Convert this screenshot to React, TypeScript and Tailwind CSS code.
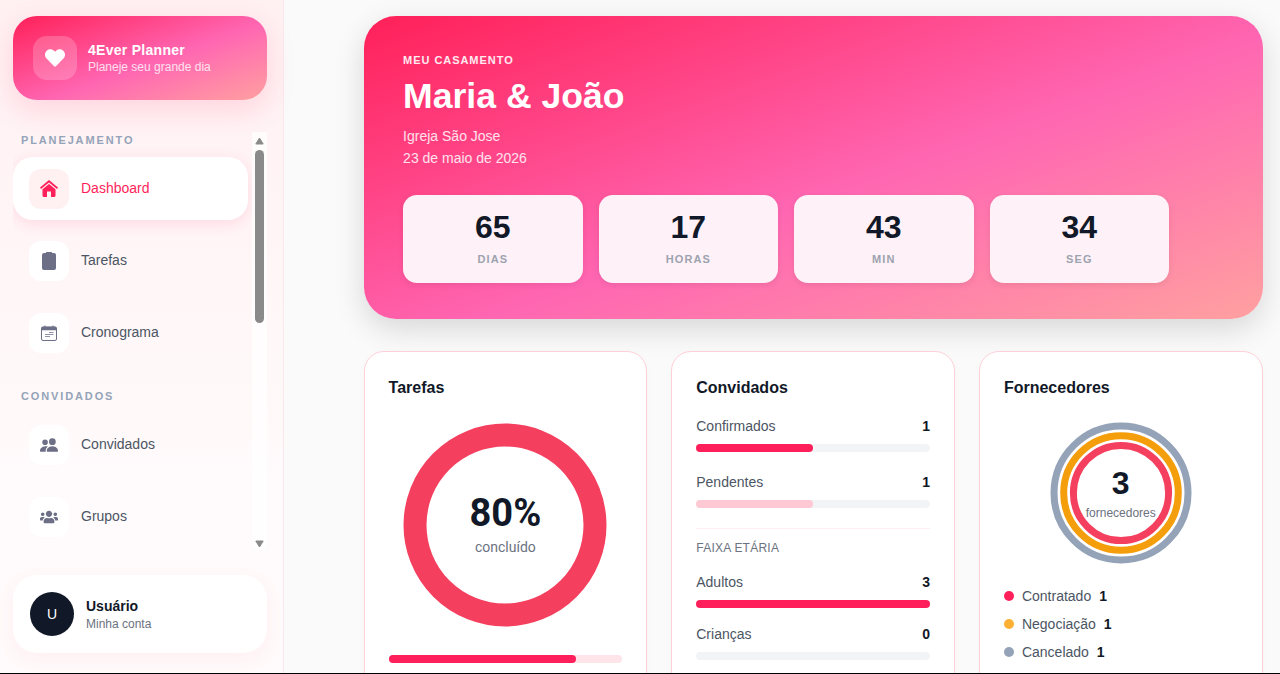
import React from "react";
import { FaHeart, FaUsers } from "react-icons/fa";
import { BsPeopleFill } from "react-icons/bs";

const grad = "bg-[linear-gradient(160deg,#ff2058_0%,#ff66b2_55%,#ffa0a0_100%)]";

function HomeIcon() {
  return (
    <svg width="18" height="17" viewBox="0 0 18 17" fill="currentColor">
      <path d="M9 0 L18 7.6 L17 9 L9 2.4 L1 9 L0 7.6 Z" />
      <path d="M9 3.9 L15.5 9.2 V15.5 Q15.5 17 14 17 H11 V11.5 H7 V17 H4 Q2.5 17 2.5 15.5 V9.2 Z" />
    </svg>
  );
}

function ClipIcon() {
  return (
    <svg width="14" height="18" viewBox="0 0 14 18" fill="currentColor">
      <path d="M4.5 0 H9.5 Q10 0 10 1 H12 Q14 1 14 3 V16 Q14 18 12 18 H2 Q0 18 0 16 V3 Q0 1 2 1 H4 Q4 0 4.5 0 Z" />
    </svg>
  );
}

function CalIcon() {
  return (
    <svg width="16" height="16" viewBox="0 0 16 16" fill="none" stroke="currentColor">
      <rect x="0.5" y="2" width="15" height="13.5" rx="1.5" strokeWidth="1" />
      <path d="M0.5 3.5 Q0.5 2 2 2 H14 Q15.5 2 15.5 3.5 V5 H0.5 Z" fill="currentColor" strokeWidth="0.5" />
      <path d="M4 0.5 V2.5 M12 0.5 V2.5" strokeWidth="1" />
      <path d="M8 7.5 H12.5 M4 9.5 H12.5 M4 11.5 H9" strokeWidth="1" opacity="0.75" />
    </svg>
  );
}

function NavItem({ icon, label, active }: { icon: React.ReactNode; label: string; active?: boolean }) {
  return (
    <div className={`flex h-[63px] items-center gap-3 rounded-[20px] pl-4 text-[14px] ${active ? "bg-white text-[#ff1f5a] shadow-[0_4px_16px_rgba(255,31,90,0.12)]" : "text-[#4b5563]"}`}>
      <div className={`flex h-10 w-10 items-center justify-center rounded-[12px] ${active ? "bg-[#fff0f2] text-[#ff1f5a]" : "bg-white text-[#6c6f86]"}`}>{icon}</div>
      <span>{label}</span>
    </div>
  );
}

function SectionLabel({ children, className }: { children: React.ReactNode; className?: string }) {
  return <div className={`pl-2 text-[11px] font-bold tracking-[1.87px] text-[#94a3b8] leading-[14px] ${className ?? ""}`}>{children}</div>;
}

function Bar({ label, value, pct, color }: { label: string; value: number; pct: number; color: string }) {
  return (
    <div>
      <div className="flex items-center justify-between text-[14px] leading-[20px]">
        <span className="text-[#4b5563]">{label}</span>
        <span className="font-bold text-[#111827]">{value}</span>
      </div>
      <div className="mt-2 h-2 rounded-full bg-[#f3f4f6]">
        <div className={`h-2 rounded-full ${color}`} style={{ width: `${pct}%` }} />
      </div>
    </div>
  );
}

function Stat({ value, label }: { value: string; label: string }) {
  return (
    <div className="flex h-[88px] w-[179.5px] flex-col items-center rounded-[14px] bg-[#fff1f8] pt-[14px] shadow-[0_2px_6px_rgba(0,0,0,0.08)]">
      <span className="text-[32px] font-bold leading-[36px] text-[#111827]">{value}</span>
      <span className="mt-[5px] text-[11px] font-semibold tracking-[0.1em] leading-[18px] text-[#9ca3af]">{label}</span>
    </div>
  );
}

function Legend({ color, label, value }: { color: string; label: string; value: number }) {
  return (
    <div className="flex h-[28px] items-center text-[14px]">
      <span className={`h-[10px] w-[10px] rounded-full ${color}`} />
      <span className="ml-2 text-[#4b5563]">{label}</span>
      <span className="ml-2 font-bold text-[#111827]">{value}</span>
    </div>
  );
}

function Card({ title, children }: { title: string; children: React.ReactNode }) {
  return (
    <div className="h-[360px] rounded-[20px] border border-[#ffd0d9] bg-white px-6 pt-[26px] shadow-[0_2px_10px_rgba(0,0,0,0.02)]">
      <div className="mb-[16px] text-[16px] font-bold leading-[20px] text-[#111827]">{title}</div>
      {children}
    </div>
  );
}

export default function App() {
  return (
    <div className="flex h-[674px] w-[1280px] flex-col overflow-hidden bg-black font-['Liberation_Sans',Arial,sans-serif]">
      <div className="flex h-[673px] overflow-hidden bg-[#fafafa]">
        <aside className="flex w-[284px] shrink-0 flex-col border-r border-[#fce8ec] bg-[linear-gradient(180deg,#fff0f2_0%,#fffafb_70%,#fffafb_100%)] pl-[13px] pr-[16px] pt-4">
          <div className={`flex h-[84px] items-center gap-[11px] rounded-[24px] px-5 shadow-[0_10px_30px_rgba(255,31,90,0.14)] ${grad}`}>
            <div className="flex h-11 w-11 items-center justify-center rounded-[14px] bg-white/20 text-[20px] text-white"><FaHeart /></div>
            <div>
              <div className="text-[14px] font-bold leading-[19px] tracking-[0.02em] text-white">4Ever Planner</div>
              <div className="text-[12px] leading-[15px] text-white/80">Planeje seu grande dia</div>
            </div>
          </div>
          <div className="mt-8 flex h-[418px] w-[254px] overflow-hidden">
            <div className="mr-1 w-[235px] pt-[1px]">
              <SectionLabel className="mb-[10px]">PLANEJAMENTO</SectionLabel>
              <NavItem active icon={<HomeIcon />} label="Dashboard" />
              <div className="mt-[9px]"><NavItem icon={<ClipIcon />} label="Tarefas" /></div>
              <div className="mt-[9px]"><NavItem icon={<CalIcon />} label="Cronograma" /></div>
              <SectionLabel className="mb-[10px] mt-[25px]">CONVIDADOS</SectionLabel>
              <NavItem icon={<BsPeopleFill className="text-[18px]" />} label="Convidados" />
              <div className="mt-[9px]"><NavItem icon={<FaUsers className="text-[18px]" />} label="Grupos" /></div>
            </div>
            <div className="flex w-[15px] flex-col items-center bg-white/70 pt-[5px]">
              <svg width="9" height="8" viewBox="0 0 9 8"><path d="M4.5 1 L8.2 7 H0.8 Z" fill="#8a8a8a" stroke="#8a8a8a" strokeLinejoin="round" /></svg>
              <div className="mt-[5px] h-[173px] w-[9px] rounded-full bg-[#8a8a8a]" />
              <div className="flex-1" />
              <svg className="mb-[2px]" width="9" height="8" viewBox="0 0 9 8"><path d="M0.8 1 H8.2 L4.5 7 Z" fill="#8a8a8a" stroke="#8a8a8a" strokeLinejoin="round" /></svg>
            </div>
          </div>
          <div className="mt-[25px] flex h-[78px] items-center gap-3 rounded-[24px] bg-white pl-[17px] shadow-[0_6px_20px_rgba(255,31,90,0.05)]">
            <div className="flex h-11 w-11 items-center justify-center rounded-full bg-[#111827] text-[14px] font-medium text-white">U</div>
            <div className="mt-[2px]">
              <div className="text-[14px] font-bold leading-[18px] text-[#111827]">Usuário</div>
              <div className="mt-px text-[12px] leading-[17px] text-[#6b7280]">Minha conta</div>
            </div>
          </div>
        </aside>
        <main className="ml-[79.6px] w-[899px] pt-4">
          <section className={`h-[303px] rounded-[32px] pl-[39.5px] pr-10 pt-[37px] text-white shadow-[0_10px_30px_rgba(0,0,0,0.14)] ${grad}`}>
            <div className="text-[11px] font-semibold tracking-[0.95px] leading-[14px] text-white/90">MEU CASAMENTO</div>
            <div className="mt-[6px] text-[35.6px] font-bold leading-[46px]">Maria &amp; João</div>
            <div className="mt-[6px] text-[14px] leading-[22px] text-white/85">Igreja São Jose<br />23 de maio de 2026</div>
            <div className="mt-[26px] flex gap-4">
              <Stat value="65" label="DIAS" />
              <Stat value="17" label="HORAS" />
              <Stat value="43" label="MIN" />
              <Stat value="34" label="SEG" />
            </div>
          </section>
          <div className="mt-8 grid grid-cols-3 gap-6">
            <Card title="Tarefas">
              <div className="flex justify-center pt-[9px]">
                <div className="relative h-[204px] w-[204px]">
                  <svg width="204" height="204" viewBox="0 0 204 204"><circle cx="102" cy="102" r="90" fill="none" stroke="#f43f5e" strokeWidth="23" /></svg>
                  <div className="absolute inset-0 flex flex-col items-center justify-center font-['Roboto',sans-serif]">
                    <span className="text-[38px] font-bold leading-[40px] text-[#111827]">80%</span>
                    <span className="mt-[4px] text-[14px] leading-[20px] text-[#6b7280]">concluído</span>
                  </div>
                </div>
              </div>
              <div className="mt-[28px] h-2 rounded-full bg-[#ffe4e9]">
                <div className="h-2 w-[80%] rounded-full bg-[#ff1f5a]" />
              </div>
            </Card>
            <Card title="Convidados">
              <div className="flex flex-col gap-[20px] pt-[2px]">
                <Bar label="Confirmados" value={1} pct={50} color="bg-[#ff1f5a]" />
                <Bar label="Pendentes" value={1} pct={50} color="bg-[#ffc9d4]" />
              </div>
              <div className="mt-5 h-px bg-[#ffeef1]" />
              <div className="mt-[11px] text-[12px] leading-[16px] tracking-[0.02em] text-[#6b7280]">FAIXA ETÁRIA</div>
              <div className="mt-[16px] flex flex-col gap-[16px]">
                <Bar label="Adultos" value={3} pct={100} color="bg-[#ff1f5a]" />
                <Bar label="Crianças" value={0} pct={0} color="bg-[#ff1f5a]" />
              </div>
            </Card>
            <Card title="Fornecedores">
              <div className="flex justify-center pt-[8px]">
                <div className="relative h-[142px] w-[142px]">
                  <svg width="142" height="142" viewBox="0 0 142 142">
                    <circle cx="71" cy="71" r="67" fill="none" stroke="#94a3b8" strokeWidth="7" />
                    <circle cx="71" cy="71" r="57.3" fill="none" stroke="#f59e0b" strokeWidth="7" />
                    <circle cx="71" cy="71" r="47.6" fill="none" stroke="#f43f5e" strokeWidth="7" />
                  </svg>
                  <div className="absolute inset-0 flex flex-col items-center justify-center">
                    <span className="text-[32px] font-bold leading-[36px] text-[#111827]">3</span>
                    <span className="mt-[4px] text-[12px] leading-[16px] text-[#6b7280]">fornecedores</span>
                  </div>
                </div>
              </div>
              <div className="mt-[18px]">
                <Legend color="bg-[#ff1f5a]" label="Contratado" value={1} />
                <Legend color="bg-[#fbb034]" label="Negociação" value={1} />
                <Legend color="bg-[#94a3b8]" label="Cancelado" value={1} />
              </div>
            </Card>
          </div>
        </main>
      </div>
      <div className="h-px bg-black" />
    </div>
  );
}
